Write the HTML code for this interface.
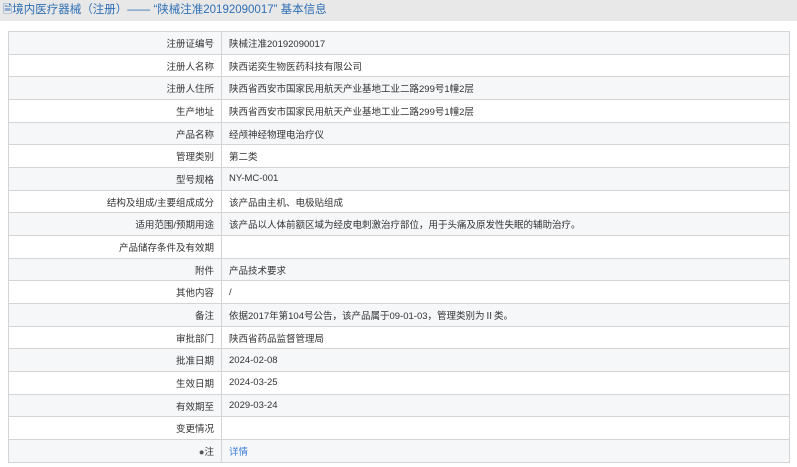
<!DOCTYPE html>
<html><head><meta charset="utf-8"><style>
body{margin:0;width:797px;height:467px;background:#fff;font-family:"Liberation Sans","Noto Sans CJK SC",sans-serif;overflow:hidden}
.hd{height:21px;background:#e8e8e8;color:#2f6fb5;font-size:11.5px;line-height:20px;padding-left:3px}
table{position:absolute;left:8px;top:31px;width:782px;height:432px;border-collapse:collapse;font-size:9.5px;color:#333}
td{border:1px solid #d4d4d4;padding:0 7px;white-space:nowrap}
td.l{width:198px;text-align:right}
tr:nth-child(odd){background:#f6f7f9}
a{color:#3a7bd5;text-decoration:none}
</style></head><body>
<div class="hd">&#128462;境内医疗器械（注册）—— “陕械注准20192090017” 基本信息</div>
<table>
<tr><td class="l">注册证编号</td><td>陕械注准20192090017</td></tr>
<tr><td class="l">注册人名称</td><td>陕西诺奕生物医药科技有限公司</td></tr>
<tr><td class="l">注册人住所</td><td>陕西省西安市国家民用航天产业基地工业二路299号1幢2层</td></tr>
<tr><td class="l">生产地址</td><td>陕西省西安市国家民用航天产业基地工业二路299号1幢2层</td></tr>
<tr><td class="l">产品名称</td><td>经颅神经物理电治疗仪</td></tr>
<tr><td class="l">管理类别</td><td>第二类</td></tr>
<tr><td class="l">型号规格</td><td>NY-MC-001</td></tr>
<tr><td class="l">结构及组成/主要组成成分</td><td>该产品由主机、电极贴组成</td></tr>
<tr><td class="l">适用范围/预期用途</td><td>该产品以人体前额区域为经皮电刺激治疗部位，用于头痛及原发性失眠的辅助治疗。</td></tr>
<tr><td class="l">产品储存条件及有效期</td><td></td></tr>
<tr><td class="l">附件</td><td>产品技术要求</td></tr>
<tr><td class="l">其他内容</td><td>/</td></tr>
<tr><td class="l">备注</td><td>依据2017年第104号公告，该产品属于09-01-03，管理类别为Ⅱ类。</td></tr>
<tr><td class="l">审批部门</td><td>陕西省药品监督管理局</td></tr>
<tr><td class="l">批准日期</td><td>2024-02-08</td></tr>
<tr><td class="l">生效日期</td><td>2024-03-25</td></tr>
<tr><td class="l">有效期至</td><td>2029-03-24</td></tr>
<tr><td class="l">变更情况</td><td></td></tr>
<tr><td class="l"><span style="color:#555">●</span>注</td><td><a>详情</a></td></tr>
</table>
</body></html>
